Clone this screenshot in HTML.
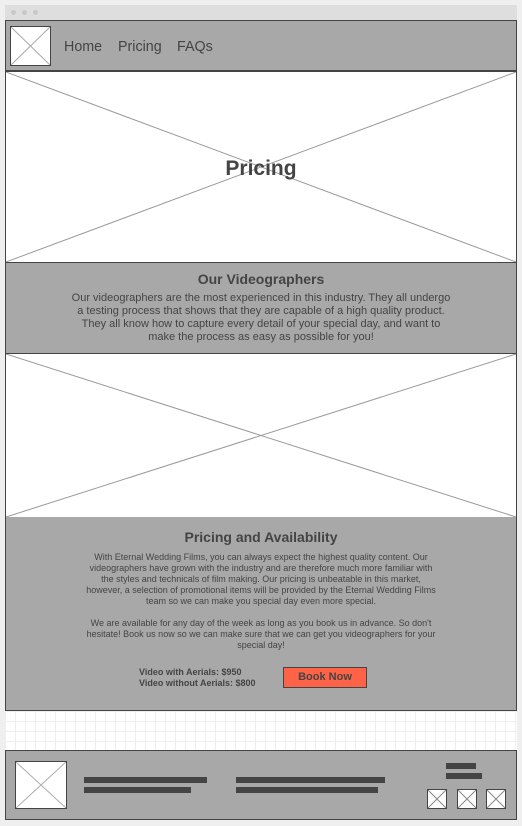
<!DOCTYPE html>
<html><head><meta charset="utf-8"><style>
*{margin:0;padding:0;box-sizing:border-box}
body{width:522px;height:826px;background:#efefef;position:relative;font-family:"Liberation Sans",sans-serif;color:#444;overflow:hidden}
.a{position:absolute}
.ph{position:absolute;background:#fff;border:1px solid #444}
.ph svg{position:absolute;left:0;top:0;width:100%;height:100%}
.sec{position:absolute;left:5px;width:512px;background:#a8a8a8;border:1px solid #444}
.bar{position:absolute;background:#444}
.c{position:absolute;text-align:center;white-space:nowrap}
</style></head><body>
<div class="a" style="left:5px;top:5px;width:512px;height:15px;background:#dedede"></div>
<div class="a" style="left:11px;top:10px;width:5px;height:5px;border-radius:50%;background:#c8c8c8"></div>
<div class="a" style="left:22px;top:10px;width:5px;height:5px;border-radius:50%;background:#c8c8c8"></div>
<div class="a" style="left:33px;top:10px;width:5px;height:5px;border-radius:50%;background:#c8c8c8"></div>

<div class="sec" style="top:20px;height:52px;border-bottom-width:2px"></div>
<div class="ph" style="left:10px;top:26px;width:41px;height:40px"><svg viewBox="0 0 10 10" preserveAspectRatio="none"><path d="M0 0L10 10M10 0L0 10" stroke="#aaa" stroke-width="1" vector-effect="non-scaling-stroke"/></svg></div>
<div class="a" style="left:64px;top:39px;font-size:14.3px;color:#444">Home</div>
<div class="a" style="left:118px;top:39px;font-size:14.3px;color:#444">Pricing</div>
<div class="a" style="left:177px;top:39px;font-size:14.3px;color:#444">FAQs</div>

<div class="ph" style="left:5px;top:71px;width:512px;height:193px;border-width:1px 1px 2px 1px"><svg viewBox="0 0 10 10" preserveAspectRatio="none"><path d="M0 0L10 10M10 0L0 10" stroke="#999" stroke-width="1" vector-effect="non-scaling-stroke"/></svg></div>
<div class="c" style="left:5px;width:512px;top:157px;font-size:21px;font-weight:bold;color:#444">Pricing</div>

<div class="sec" style="top:263px;height:92px;border-width:0 1px 2px 1px"></div>
<div class="c" style="left:5px;width:512px;top:271px;font-size:14px;font-weight:bold">Our Videographers</div>
<div class="c" style="left:5px;width:512px;top:292px;font-size:11px;line-height:13px">Our videographers are the most experienced in this industry. They all undergo<br>a testing process that shows that they are capable of a high quality product.<br>They all know how to capture every detail of your special day, and want to<br>make the process as easy as possible for you!</div>

<div class="ph" style="left:5px;top:354px;width:512px;height:164px;border-width:0 1px 1px 1px"><svg viewBox="0 0 10 10" preserveAspectRatio="none"><path d="M0 0L10 10M10 0L0 10" stroke="#999" stroke-width="1" vector-effect="non-scaling-stroke"/></svg></div>

<div class="sec" style="top:517px;height:194px;border-top-width:0"></div>
<div class="c" style="left:5px;width:512px;top:529px;font-size:14px;font-weight:bold">Pricing and Availability</div>
<div class="c" style="left:5px;width:512px;top:552px;font-size:9px;line-height:11px">With Eternal Wedding Films, you can always expect the highest quality content. Our<br>videographers have grown with the industry and are therefore much more familiar with<br>the styles and technicals of film making. Our pricing is unbeatable in this market,<br>however, a selection of promotional items will be provided by the Eternal Wedding Films<br>team so we can make you special day even more special.<br><br>We are available for any day of the week as long as you book us in advance. So don't<br>hesitate! Book us now so we can make sure that we can get you videographers for your<br>special day!</div>
<div class="a" style="left:139px;top:667px;font-size:9px;line-height:11px;font-weight:bold">Video with Aerials: $950<br>Video without Aerials: $800</div>
<div class="a" style="left:283px;top:667px;width:84px;height:21px;background:#ff6347;border:1px solid #444;font-size:11px;font-weight:bold;text-align:center;line-height:19px">Book Now</div>

<div class="a" style="left:5px;top:711px;width:512px;height:39px;background-color:#fff;background-image:linear-gradient(#eee 1px,transparent 1px),linear-gradient(90deg,#eee 1px,transparent 1px);background-size:10px 10px"></div>

<div class="sec" style="top:750px;height:70px"></div>
<div class="ph" style="left:15px;top:761px;width:52px;height:48px"><svg viewBox="0 0 10 10" preserveAspectRatio="none"><path d="M0 0L10 10M10 0L0 10" stroke="#aaa" stroke-width="1" vector-effect="non-scaling-stroke"/></svg></div>
<div class="bar" style="left:84px;top:777px;width:123px;height:6px"></div>
<div class="bar" style="left:84px;top:787px;width:107px;height:6px"></div>
<div class="bar" style="left:236px;top:777px;width:149px;height:6px"></div>
<div class="bar" style="left:236px;top:787px;width:142px;height:6px"></div>
<div class="bar" style="left:446px;top:763px;width:30px;height:6px"></div>
<div class="bar" style="left:446px;top:773px;width:36px;height:6px"></div>
<div class="ph" style="left:427px;top:789px;width:20px;height:20px"><svg viewBox="0 0 10 10" preserveAspectRatio="none"><path d="M0 0L10 10M10 0L0 10" stroke="#888" stroke-width="1" vector-effect="non-scaling-stroke"/></svg></div>
<div class="ph" style="left:457px;top:789px;width:20px;height:20px"><svg viewBox="0 0 10 10" preserveAspectRatio="none"><path d="M0 0L10 10M10 0L0 10" stroke="#888" stroke-width="1" vector-effect="non-scaling-stroke"/></svg></div>
<div class="ph" style="left:486px;top:789px;width:20px;height:20px"><svg viewBox="0 0 10 10" preserveAspectRatio="none"><path d="M0 0L10 10M10 0L0 10" stroke="#888" stroke-width="1" vector-effect="non-scaling-stroke"/></svg></div>
</body></html>
